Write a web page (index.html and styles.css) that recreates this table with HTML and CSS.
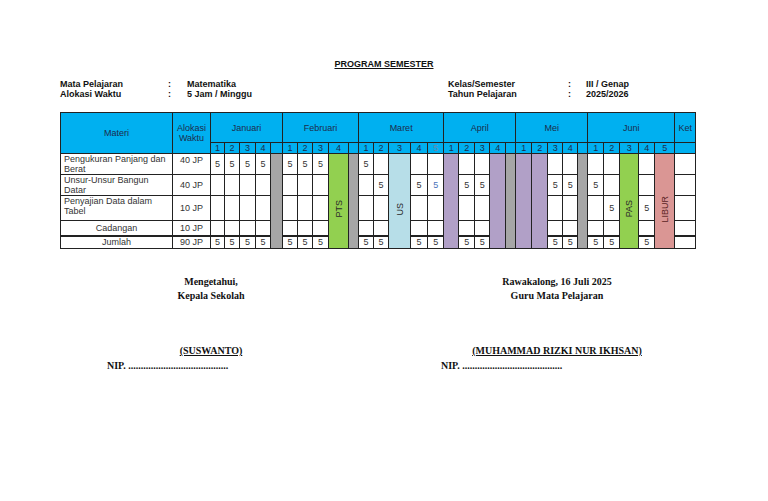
FILE: index.html
```html
<!DOCTYPE html>
<html>
<head>
<meta charset="utf-8">
<link rel="stylesheet" href="styles.css">
</head>
<body>
<div class="title">PROGRAM SEMESTER</div>
<div class="info">
  <div class="info-group left">
    <span>Mata Pelajaran</span><span>:</span><span>Matematika</span>
    <span>Alokasi Waktu</span><span>:</span><span>5 Jam / Minggu</span>
  </div>
  <div class="info-group right">
    <span>Kelas/Semester</span><span>:</span><span>III / Genap</span>
    <span>Tahun Pelajaran</span><span>:</span><span>2025/2026</span>
  </div>
</div>
<table class="grid">
  <colgroup>
    <col style="width:112px"><col style="width:38px">
    <col style="width:14px"><col style="width:15px"><col style="width:16px"><col style="width:15px"><col style="width:12px">
    <col style="width:15px"><col style="width:15px"><col style="width:16px"><col style="width:20px"><col style="width:10px">
    <col style="width:15px"><col style="width:15px"><col style="width:22px"><col style="width:17px"><col style="width:16px">
    <col style="width:15px"><col style="width:16px"><col style="width:15px"><col style="width:16px"><col style="width:10px">
    <col style="width:16px"><col style="width:16px"><col style="width:15px"><col style="width:15px"><col style="width:10px">
    <col style="width:16px"><col style="width:16px"><col style="width:19px"><col style="width:16px"><col style="width:20px">
    <col style="width:21px">
  </colgroup>
  <thead>
    <tr class="h1">
      <th rowspan="2">Materi</th>
      <th rowspan="2">Alokasi<br>Waktu</th>
      <th colspan="5">Januari</th>
      <th colspan="5">Februari</th>
      <th colspan="5">Maret</th>
      <th colspan="5">April</th>
      <th colspan="5">Mei</th>
      <th colspan="5">Juni</th>
      <th>Ket</th>
    </tr>
    <tr class="h2">
      <th>1</th><th>2</th><th>3</th><th>4</th><th></th>
      <th>1</th><th>2</th><th>3</th><th>4</th><th></th>
      <th>1</th><th>2</th><th>3</th><th>4</th><th class="dim">5</th>
      <th>1</th><th>2</th><th>3</th><th>4</th><th></th>
      <th>1</th><th>2</th><th>3</th><th>4</th><th></th>
      <th>1</th><th>2</th><th>3</th><th>4</th><th>5</th>
      <th></th>
    </tr>
  </thead>
  <tbody>
    <tr class="r1">
      <td class="mat">Pengukuran Panjang dan Berat</td>
      <td class="jp top">40 JP</td>
      <td>5</td><td>5</td><td>5</td><td>5</td>
      <td rowspan="5" class="gray"></td>
      <td>5</td><td>5</td><td>5</td>
      <td rowspan="5" class="green"><span class="vt">PTS</span></td>
      <td rowspan="5" class="gray"></td>
      <td>5</td><td></td>
      <td rowspan="5" class="lblue"><span class="vt">US</span></td>
      <td></td><td></td>
      <td rowspan="5" class="purple"></td>
      <td></td><td></td>
      <td rowspan="5" class="purple"></td>
      <td rowspan="5" class="gray"></td>
      <td rowspan="5" class="purple"></td>
      <td rowspan="5" class="purple"></td>
      <td></td><td></td>
      <td rowspan="5" class="gray"></td>
      <td></td><td></td>
      <td rowspan="5" class="green"><span class="vt">PAS</span></td>
      <td></td>
      <td rowspan="5" class="pink"><span class="vt red">LIBUR</span></td>
      <td></td>
    </tr>
    <tr class="r2">
      <td class="mat">Unsur-Unsur Bangun Datar</td>
      <td class="jp">40 JP</td>
      <td></td><td></td><td></td><td></td>
      <td></td><td></td><td></td>
      <td></td><td>5</td>
      <td>5</td><td class="blue">5</td>
      <td>5</td><td>5</td>
      <td>5</td><td>5</td>
      <td>5</td><td></td>
      <td></td>
      <td></td>
    </tr>
    <tr class="r3">
      <td class="mat">Penyajian Data dalam Tabel</td>
      <td class="jp">10 JP</td>
      <td></td><td></td><td></td><td></td>
      <td></td><td></td><td></td>
      <td></td><td></td>
      <td></td><td></td>
      <td></td><td></td>
      <td></td><td></td>
      <td></td><td>5</td>
      <td>5</td>
      <td></td>
    </tr>
    <tr class="r4">
      <td class="mat center">Cadangan</td>
      <td class="jp">10 JP</td>
      <td></td><td></td><td></td><td></td>
      <td></td><td></td><td></td>
      <td></td><td></td>
      <td></td><td></td>
      <td></td><td></td>
      <td></td><td></td>
      <td></td><td></td>
      <td></td>
      <td></td>
    </tr>
    <tr class="r5">
      <td class="mat center">Jumlah</td>
      <td class="jp">90 JP</td>
      <td>5</td><td>5</td><td>5</td><td>5</td>
      <td>5</td><td>5</td><td>5</td>
      <td>5</td><td>5</td>
      <td>5</td><td>5</td>
      <td>5</td><td>5</td>
      <td>5</td><td>5</td>
      <td>5</td><td>5</td>
      <td>5</td>
      <td></td>
    </tr>
  </tbody>
</table>
<div class="signs">
  <div class="sign sign-left">
    <div class="sline">Mengetahui,</div>
    <div class="sline">Kepala Sekolah</div>
    <div class="sname">(SUSWANTO)</div>
    <div class="nip">NIP. ........................................</div>
  </div>
  <div class="sign sign-right">
    <div class="sline">Rawakalong, 16 Juli 2025</div>
    <div class="sline">Guru Mata Pelajaran</div>
    <div class="sname">(MUHAMMAD RIZKI NUR IKHSAN)</div>
    <div class="nip">NIP. ........................................</div>
  </div>
</div>
</body>
</html>
```
FILE: styles.css
```css
html, body {
  margin: 0;
  padding: 0;
  background: #ffffff;
}
body {
  font-family: "Liberation Sans", Arial, sans-serif;
  color: #222;
  width: 768px;
}
.title {
  padding-top: 58px;
  text-align: center;
  font-size: 9px;
  font-weight: bold;
  line-height: 12px;
  text-decoration: underline;
  color: #111;
}
.info {
  display: flex;
  margin-top: 9px;
  padding-left: 60px;
  font-size: 9px;
  font-weight: bold;
  line-height: 10px;
  color: #111;
}
.info-group {
  display: grid;
}
.info-group.left {
  grid-template-columns: 108px 19px 261px;
}
.info-group.right {
  grid-template-columns: 120px 18px 100px;
}
.grid {
  margin-top: 13px;
  margin-left: 60px;
  border-collapse: collapse;
  table-layout: fixed;
  width: 636px;
  font-size: 9px;
  line-height: 10px;
  color: #333;
}
.grid th, .grid td {
  border: 1px solid #222;
  padding: 0;
  text-align: center;
  vertical-align: middle;
  overflow: hidden;
}
.grid th {
  background: #00b0f0;
  color: #1c2c4c;
  font-weight: normal;
}
.grid .h1 { height: 30px; }
.grid .h2 { height: 11px; }
.grid .h2 th { line-height: 9px; }
.grid .h2 .dim { color: #6d86a6; }
.grid .r1 { height: 21px; }
.grid .r2 { height: 21px; }
.grid .r3 { height: 25px; }
.grid .r4 { height: 15px; }
.grid .r5 { height: 13px; }
.grid .r5 td { border-top: 2px solid #222; }
.grid td.mat {
  text-align: left;
  vertical-align: top;
  padding: 0 3px;
}
.grid td.mat.center {
  text-align: center;
  vertical-align: middle;
}
.grid td.top {
  vertical-align: top;
  padding-top: 1px;
}
.grid td.blue { color: #4a72b8; }
.grid td.gray { background: #a6a6a6; }
.grid td.green { background: #92d050; }
.grid td.lblue { background: #b7dee8; }
.grid td.purple { background: #b1a0c7; }
.grid td.pink { background: #da9694; }
.grid td.green, .grid td.lblue, .grid td.pink {
  padding-top: 18px;
}
.vt {
  display: inline-block;
  writing-mode: vertical-rl;
  transform: rotate(180deg);
  font-size: 9px;
  line-height: 10px;
  color: #2a2a2a;
}
.vt.red { color: #5a2424; }
.signs {
  display: flex;
  margin-top: 26px;
  font-family: "Liberation Serif", "Times New Roman", serif;
  font-weight: bold;
  font-size: 10px;
  color: #111;
}
.sign {
  display: flex;
  flex-direction: column;
}
.sign-left {
  margin-left: 107px;
  width: 208px;
}
.sign-right {
  margin-left: 126px;
  width: 232px;
}
.sline {
  text-align: center;
  line-height: 14px;
}
.sname {
  text-align: center;
  line-height: 15px;
  margin-top: 40px;
  text-decoration: underline;
}
.nip {
  line-height: 15px;
  text-align: left;
}
```
